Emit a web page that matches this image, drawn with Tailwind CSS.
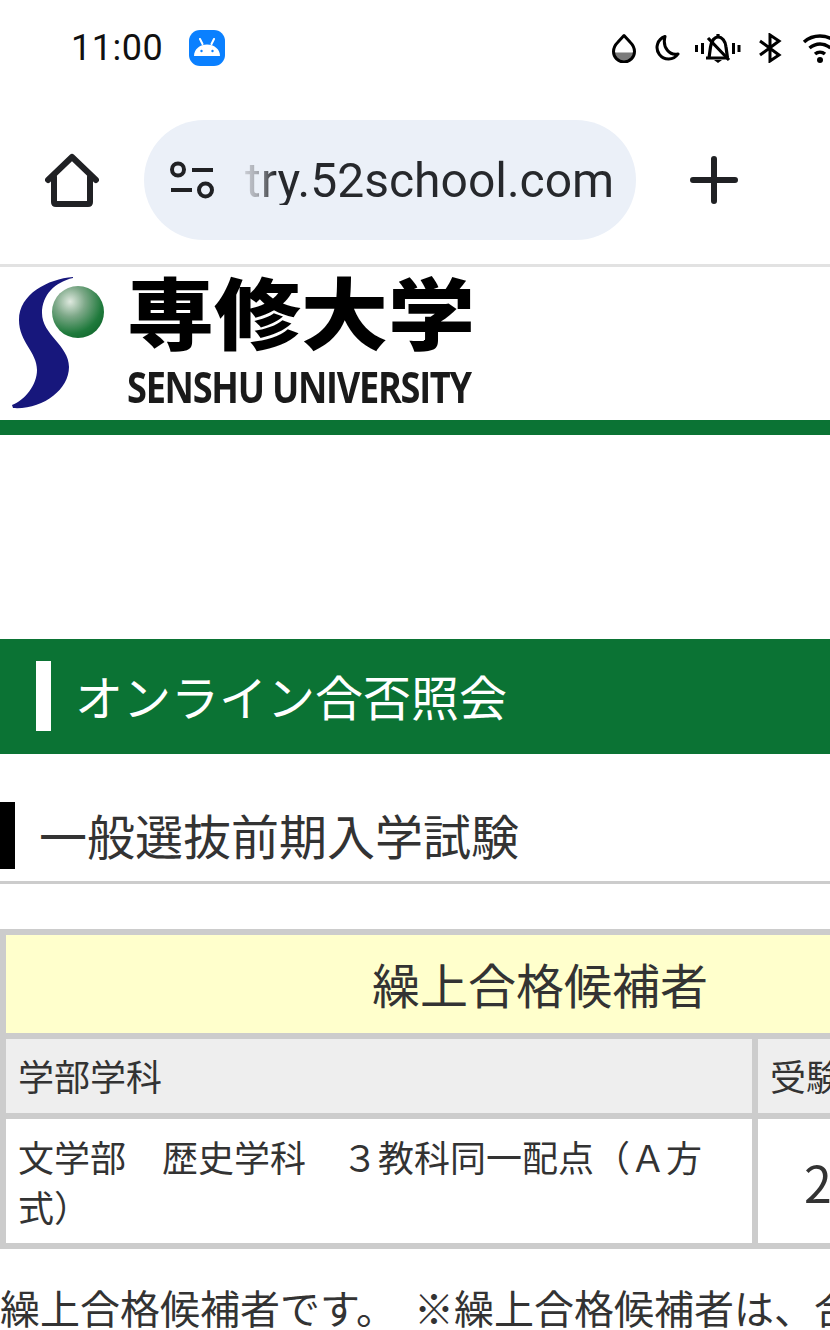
<!DOCTYPE html>
<html lang="ja">
<head>
<meta charset="UTF-8">
<meta name="viewport" content="width=device-width, initial-scale=1.0">
<title>オンライン合否照会</title>
<script src="https://cdn.jsdelivr.net/npm/@tailwindcss/browser@4"></script>
</head>
<body class="bg-white">
<div class="w-[830px] h-[1330px] overflow-hidden bg-white text-[#333] font-['Noto_Sans_CJK_JP',sans-serif]">

    <!-- status bar -->
    <div class="h-[95px] flex items-center pl-[71px] overflow-hidden">
        <span class="text-[36px] leading-none tracking-[0.5px] text-[#111] font-['Roboto',sans-serif]">11:00</span>
        <span class="ml-[26px] w-[36px] h-[36px] rounded-[11px] bg-[#0a80ff] flex items-center justify-center">
            <svg width="30" height="20" viewBox="0 0 30 20" fill="none">
                <path d="M2 18C2 11 8 6.500 15 6.500S28 11 28 18Z" fill="#fff"/>
                <path d="M8 1L10.500 6M22 1L19.500 6" stroke="#fff" stroke-width="2" stroke-linecap="round"/>
                <circle cx="9.500" cy="13" r="1.200" fill="#0a80ff"/>
                <circle cx="20.500" cy="13" r="1.200" fill="#0a80ff"/>
            </svg>
        </span>
        <div class="ml-auto flex items-center -mr-[8px]">
            <svg width="26" height="30" viewBox="0 0 26 30" fill="none">
                <path d="M3.500 19.500A9.500 9.500 0 0 0 22.500 19.500H3.500Z" fill="#7b7b7b"/>
                <path d="M13 2.500L7 9C4.500 11.500 2.500 14.500 2.500 18.500A10.500 10.500 0 0 0 23.500 18.500C23.500 14.500 21.500 11.500 19 9Z" stroke="#000" stroke-width="3" stroke-linejoin="round"/>
            </svg>
            <svg class="ml-[16px]" width="27" height="28" viewBox="0 0 27 28" fill="none">
                <path d="M12 2.500A11.500 11.500 0 1 0 25 20C17 22 9 14 12 2.500Z" stroke="#000" stroke-width="3" stroke-linejoin="round"/>
            </svg>
            <svg class="ml-[15px]" width="46" height="30" viewBox="0 0 46 30" fill="none">
                <path d="M1.500 12V19M7.500 10V21M38.500 10V21M44 12V19" stroke="#000" stroke-width="3"/>
                <path d="M11 25H34M14 25L15.500 14C16.500 7 20 4 23 4C27 4 30.500 8 31 14L32.500 25" stroke="#000" stroke-width="3.200" stroke-linejoin="round"/>
                <path d="M13 5L34 27M23 4V1" stroke="#000" stroke-width="3.200"/>
                <path d="M19 27H27L23 30Z" fill="#000"/>
            </svg>
            <svg class="ml-[17px]" width="24" height="30" viewBox="0 0 24 30" fill="none">
                <path d="M2 8L21 22L12 28V2L21 8L2 22" stroke="#000" stroke-width="3"/>
            </svg>
            <svg class="ml-[20px]" width="36" height="30" viewBox="0 0 36 30" fill="none">
                <path d="M2 9C11 1 25 1 34 9M7.500 15C14 9.500 22 9.500 28.500 15M13 21C16 18.500 20 18.500 23 21" stroke="#000" stroke-width="3.500"/>
                <circle cx="18" cy="27" r="3" fill="#000"/>
            </svg>
        </div>
    </div>

    <!-- browser toolbar -->
    <div class="h-[172px] border-b-[3px] border-[#e2e2e2] pl-[45px] pt-[25px] flex items-start">
        <svg class="mt-[33px]" width="54" height="54" viewBox="0 0 54 54" fill="none" stroke="#202124" stroke-width="6" stroke-linecap="round" stroke-linejoin="round">
            <path d="M3 27L27 4L51 27"/>
            <path d="M9 24V49Q9 51 11 51H43Q45 51 45 49V24"/>
        </svg>
        <div class="ml-[45px] w-[492px] h-[120px] rounded-[60px] bg-[#ebf0f8] flex items-center pl-[24px]">
            <svg width="48" height="40" viewBox="0 0 48 40" fill="none" stroke="#202124" stroke-width="4">
                <circle cx="10" cy="9.500" r="6"/>
                <path d="M24 10H45M3 30H24"/>
                <circle cx="37.500" cy="30" r="6.500"/>
            </svg>
            <span class="ml-[29px] mt-[2px] text-[48px] leading-none font-['Roboto',sans-serif] bg-[linear-gradient(90deg,#c9ccd3_0,#a8abb2_12px,#26282c_30px)] bg-clip-text text-transparent">try.52school.com</span>
        </div>
        <svg class="ml-[54px] mt-[36px]" width="48" height="48" viewBox="0 0 48 48" fill="none" stroke="#202124" stroke-width="6" stroke-linecap="round">
            <path d="M3 24H45M24 3V45"/>
        </svg>
    </div>

    <!-- logo -->
    <div class="h-[153px] flex items-start overflow-hidden">
        <svg class="mt-[3px] blur-[0.5px]" width="120" height="145" viewBox="0 0 120 145">
            <defs>
                <radialGradient id="ball" cx="0.35" cy="0.3" r="0.72">
                    <stop offset="0" stop-color="#dfe9df"/>
                    <stop offset="0.4" stop-color="#7da888"/>
                    <stop offset="0.85" stop-color="#1f7a3c"/>
                    <stop offset="1" stop-color="#176f33"/>
                </radialGradient>
            </defs>
            <path d="M73 7C48 9 19 24 19 50C19 72 37 82 37 100C37 115 25 130 12 135L13 138C42 140 69 120 69 97C69 75 42 65 42 43C42 25 55 12 73 8Z" fill="#17177c"/>
            <circle cx="78" cy="42" r="26" fill="url(#ball)"/>
        </svg>
        <div class="ml-[7px] flex flex-col text-black blur-[0.5px]">
            <span class="block h-[98px] pt-[2px] text-[87px] leading-[90px] font-black origin-top scale-y-[0.9]">専修大学</span>
            <span class="block text-[43px] leading-[44px] font-bold font-['Open_Sans',sans-serif] tracking-[-1.500px] text-[#1a1a1a] whitespace-nowrap origin-left scale-x-[0.84]">SENSHU UNIVERSITY</span>
        </div>
    </div>
    <div class="h-[15px] bg-[#0b7334]"></div>

    <!-- page title -->
    <div class="mt-[204px] h-[115px] bg-[#0b7334] flex items-center pl-[36px]">
        <span class="w-[15px] h-[70px] mb-[2px] bg-white"></span>
        <h1 class="ml-[24px] mb-[4px] text-[48px] leading-none text-white">オンライン合否照会</h1>
    </div>

    <div class="mt-[48px] pb-[12px] border-b-[3px] border-[#ccc]">
        <h2 class="h-[67px] border-l-[15px] border-black pl-[24px] text-[48px] leading-[64px]">一般選抜前期入学試験</h2>
    </div>

    <!-- result table -->
    <table class="mt-[45px] w-[1080px] table-fixed border-separate border-spacing-[6px] bg-[#ccc]">
        <colgroup>
            <col class="w-[746px]">
            <col>
        </colgroup>
        <tbody>
            <tr>
                <th colspan="2" class="h-[98px] pb-[3px] bg-[#ffffcc] text-[48px] font-normal text-center">繰上合格候補者</th>
            </tr>
            <tr>
                <th class="h-[74px] pb-[2px] bg-[#eeeeee] pl-[12px] text-left text-[36px] font-normal">学部学科</th>
                <th class="h-[74px] pb-[2px] bg-[#eeeeee] pl-[12px] text-left text-[36px] font-normal">受験番号</th>
            </tr>
            <tr>
                <td class="h-[124px] pb-[1px] bg-white pl-[12px] pr-[13px] text-[36px] leading-[50px]">文学部　歴史学科　３教科同一配点（Ａ方式）</td>
                <td class="h-[124px] bg-white pl-[46px] text-[50px]">2</td>
            </tr>
        </tbody>
    </table>

    <p class="mt-[28px] text-[40px] leading-[60px] whitespace-pre">繰上合格候補者です。  ※繰上合格候補者は、合</p>
</div>
</body>
</html>
